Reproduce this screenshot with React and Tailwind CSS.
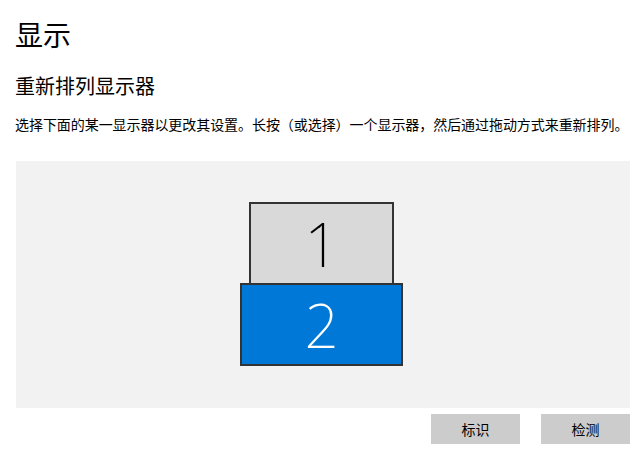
import React from "react";

const cjk = { fontFamily: '"Noto Sans CJK SC", "Noto Sans", sans-serif' };

function Monitor({ num, active }) {
  return (
    <div
      className={`flex items-center justify-center border-2 border-[#333333] ${
        active ? "h-[83px] w-[163px] bg-[#0078d7] text-white" : "h-[83px] w-[145px] bg-[#d9d9d9] text-black"
      }`}
    >
      <span className="text-[60px] font-extralight leading-none" style={{ fontFamily: '"Noto Sans", sans-serif' }}>
        {num}
      </span>
    </div>
  );
}

export default function App() {
  return (
    <div className="h-[457px] w-[637px] bg-white pl-[15px] pr-[7px] text-black" style={cjk}>
      {/* heading */}
      <h1 className="pt-[14px] text-[28px] leading-[40px]">显示</h1>
      <h2 className="mt-[18px] text-[20px] leading-[28px]">重新排列显示器</h2>
      <p className="mt-[14px] whitespace-nowrap text-[14px] leading-[20px] tracking-[-0.06px]">
        选择下面的某一显示器以更改其设置。长按（或选择）一个显示器，然后通过拖动方式来重新排列。
      </p>

      {/* arrange canvas */}
      <div className="ml-px mt-[27px] h-[247px] bg-[#f2f2f2] pl-[224px] pt-[41px]">
        <div className="flex w-[163px] flex-col items-center">
          <Monitor num="1" />
          <div className="-mt-[2px]">
            <Monitor num="2" active />
          </div>
        </div>
      </div>

      {/* buttons */}
      <div className="mt-[6px] flex justify-end gap-[21px]">
        <button className="h-[30px] w-[89px] bg-[#cccccc] text-[14px] text-black">标识</button>
        <button className="h-[30px] w-[89px] bg-[#cccccc] text-[14px] text-black">检测</button>
      </div>
    </div>
  );
}
